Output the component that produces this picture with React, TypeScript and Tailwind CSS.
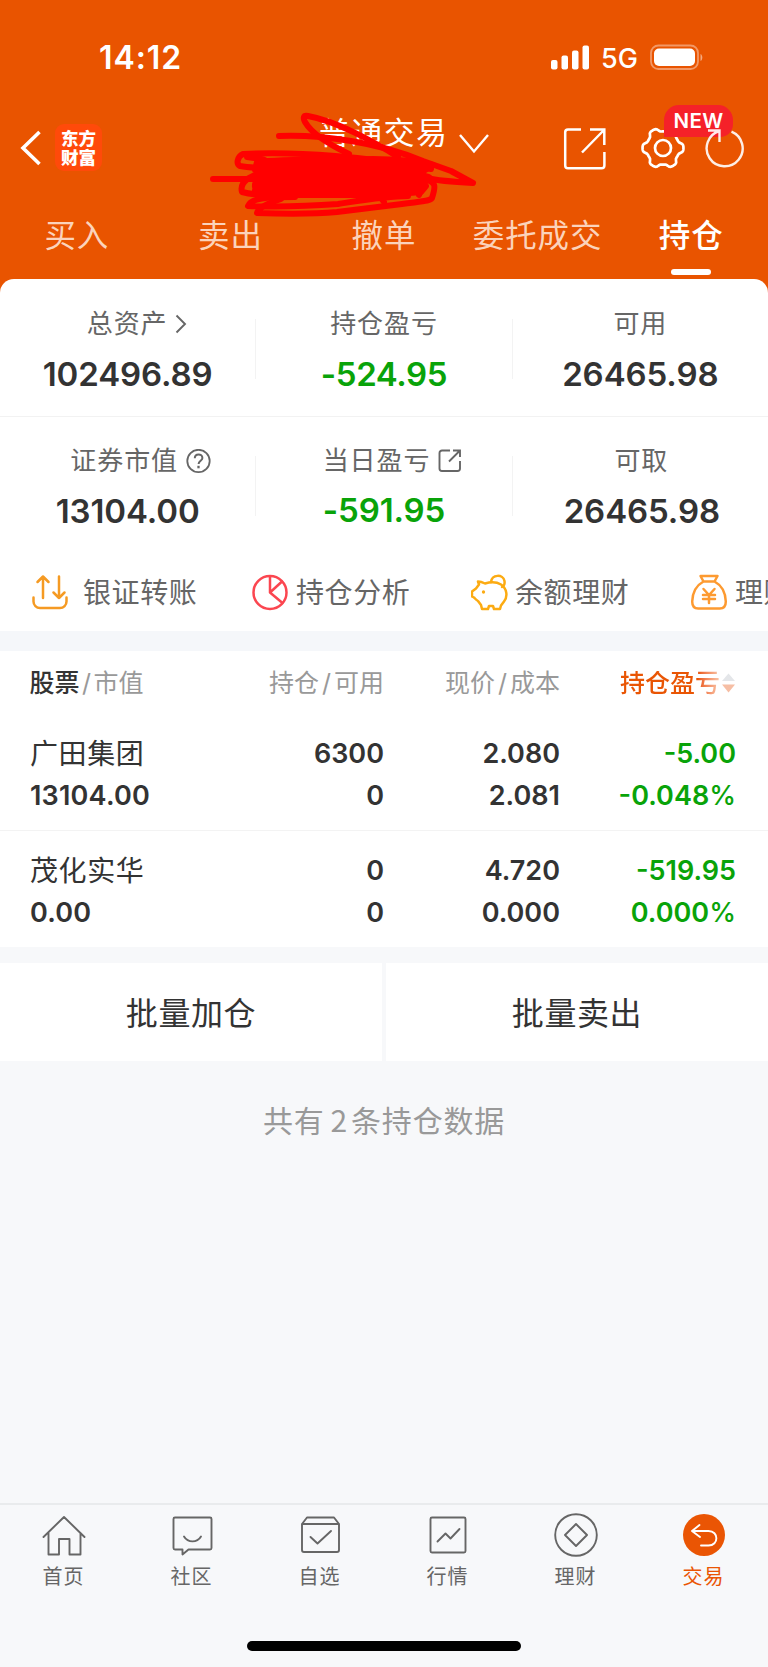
import React from "react";

const tabs = ["买入", "卖出", "撤单", "委托成交", "持仓"];

const holdings = [
  {
    name: "广田集团",
    value: "13104.00",
    amount: "6300",
    available: "0",
    price: "2.080",
    cost: "2.081",
    profit: "-5.00",
    percent: "-0.048",
  },
  {
    name: "茂化实华",
    value: "0.00",
    amount: "0",
    available: "0",
    price: "4.720",
    cost: "0.000",
    profit: "-519.95",
    percent: "0.000",
  },
];

// six rounded teeth around a circle
const gearPath = (() => {
  const points: string[] = [];
  for (let deg = 0; deg < 360; deg += 4) {
    const a = (deg * Math.PI) / 180;
    const r = 18.5 + 2 * Math.tanh(2.2 * Math.cos(6 * a));
    points.push(
      `${(22 + r * Math.cos(a)).toFixed(2)} ${(22 + r * Math.sin(a)).toFixed(2)}`
    );
  }
  return `M${points.join("L")}Z`;
})();

const StatusBar = () => (
  <div className="flex h-[100px] items-center pt-[15px] pl-[99px] pr-[64px] text-white">
    <span className="text-[32px] leading-none font-semibold tracking-[0.9px]">14:12</span>
    <svg className="ml-auto" width="39" height="26" viewBox="0 0 39 26" fill="currentColor">
      <rect x="0" y="15" width="6.5" height="9.5" rx="2" />
      <rect x="10.5" y="10.5" width="6.5" height="14" rx="2" />
      <rect x="21" y="5.5" width="6.5" height="19" rx="2" />
      <rect x="31.5" y="0.5" width="6.5" height="24" rx="2" />
    </svg>
    <span className="ml-[11px] w-[38px] pt-[1px] text-[27px] leading-none font-medium">5G</span>
    <svg className="ml-[11px]" width="54" height="27" viewBox="0 0 54 27">
      <rect x="1" y="1.5" width="47" height="23.5" rx="7.5" fill="none" stroke="#fff" strokeOpacity="0.4" strokeWidth="1.8" />
      <rect x="4" y="4.5" width="41" height="17.5" rx="5" fill="#fff" />
      <path d="M50.5 10v7c2.4-1 2.4-6 0-7z" fill="#fff" fillOpacity="0.5" />
    </svg>
  </div>
);

const Scribble = () => (
  <svg
    className="absolute left-[205px] top-[105px] pointer-events-none"
    width="280"
    height="120"
    viewBox="0 0 280 120"
    fill="none"
    stroke="#ff0000"
    strokeWidth="6"
    strokeLinecap="round"
    strokeLinejoin="round"
  >
    <path d="M74 31c26-1 48 1 72 5 25 4 50 11 72 20l28 10 22 12c-18-1-34-2-46-5" />
    <path d="M193 52C168 36 131 16 103 11c-5-1-5 2-3 6 7 12 23 22 44 32" />
    <path d="M226 64C170 52 90 46 38 49c-6 3-7 10-3 12 22 4 60 3 96 4" />
    <path d="M8 74h92M60 66c-14 5-26 10-23 21 14 4 45 4 65 1M50 82c-1-8 6-10 22-16" />
    <path d="M90 92c-29 0-44 1-47 9 27 1 63 0 90-2 26-4 49-8 70-8" />
    <path d="M76 94c-15 5-23 9-24 14 30 1 58 1 80-1l65-8c22-3 28-3 30-6 4-12 4-16-7-19" />
    <path d="M172 88l7 9M42 52c17 2 22 3 18 6M218 78l-4 12" />
    <path
      fill="#ff0000"
      d="M52 57c22-3 82-2 116-3 20 0 43 2 60 6l-14 9 10 3-6 4 3 5-5 6-34 3-60 0H94l-44-5 44-2-44-3 10-8 38 1-20-4-28-4z"
    />
  </svg>
);

const Header = () => (
  <div className="relative flex h-[98px] text-white">
    <svg className="ml-[20px] mt-[30px]" width="22" height="36" viewBox="0 0 22 36" fill="none" stroke="#fff" strokeWidth="3.6">
      <path d="M19.5 2L3 18l16.5 16" />
    </svg>
    <div className="ml-[13px] mt-[24px] flex h-[47px] w-[47px] flex-col items-center justify-center rounded-[9px] bg-[#ff4a0a] text-[17.5px] leading-[19px] font-black">
      <span>东方</span>
      <span>财富</span>
    </div>
    <div className="ml-[217px] mt-[17px] h-[31px] w-[129px] text-[31px] leading-[31px] tracking-[1.3px] whitespace-nowrap">普通交易</div>
    <svg className="ml-[10px] mt-[33px]" width="32" height="22" viewBox="0 0 32 22" fill="none" stroke="#fff" strokeWidth="2.4">
      <path d="M2 2l14 16.5L30 2" />
    </svg>
    <svg className="ml-[73px] mt-[27px]" width="44" height="44" viewBox="0 0 44 44" fill="none" stroke="#fff" strokeWidth="2.5">
      <path d="M18 2.5H5a2.8 2.8 0 0 0-2.8 2.8v33.2a2.8 2.8 0 0 0 2.8 2.8h33.6a2.8 2.8 0 0 0 2.8-2.8V25M27 2.5h14.3V18M40.5 3.5L19 25.5" />
    </svg>
    <svg className="ml-[34px] mt-[26px]" width="44" height="44" viewBox="0 0 44 44" fill="none" stroke="#fff" strokeWidth="2.7" strokeLinejoin="round">
      <path d={gearPath} />
      <circle cx="22" cy="22" r="8" />
    </svg>
    <div className="absolute left-[664px] top-[5px] flex h-[32px] w-[69px] items-center justify-center rounded-t-[15px] rounded-br-[13px] bg-[#f52129] text-[20.5px] leading-none font-semibold tracking-[0.4px]">
      NEW
    </div>
    <svg className="relative ml-[19px] mt-[28px]" width="40" height="41" viewBox="0 0 40 41" fill="none" stroke="#fff" strokeOpacity="0.9" strokeWidth="2.4">
      <path d="M27.5 3.6A18 18 0 1 1 15.5 3M4 2.5h11.5V14" />
    </svg>
  </div>
);

const Stat = ({ label, value, green, icon, labelClass = "", valueClass = "" }: any) => (
  <div className="flex flex-1 flex-col items-center">
    <div className={`flex h-[26px] items-center text-[26px] leading-[26px] tracking-[0.9px] text-[#666] ${labelClass}`}>
      {label}
      {icon}
    </div>
    <div
      className={`mt-[20px] h-[34px] text-[33px] leading-[34px] font-semibold tracking-[-0.1px] ${
        green ? "text-[#09a309]" : "text-[#333]"
      } ${valueClass}`}
    >
      {value}
    </div>
  </div>
);

const Line = () => <div className="mt-[8px] h-[60px] w-px bg-[#f3f3f3]" />;

const Summary = () => (
  <div className="rounded-t-[14px] bg-white">
    <div className="flex h-[138px] border-b border-[#f2f2f2] pt-[32px]">
      <Stat
        label="总资产"
        value="102496.89"
        labelClass="pl-[20px]"
        icon={
          <svg className="ml-[7px]" width="14" height="20" viewBox="0 0 14 20" fill="none" stroke="#666" strokeWidth="1.9">
            <path d="M1.5 1.5l8.5 8.5-8.5 8.5" />
          </svg>
        }
      />
      <Line />
      <Stat label="持仓盈亏" value="-524.95" green valueClass="tracking-[-0.4px]" />
      <Line />
      <Stat label="可用" value="26465.98" />
    </div>
    <div className="flex h-[136px] pt-[31px]">
      <Stat
        label="证券市值"
        value="13104.00"
        labelClass="pl-[26px]"
        icon={
          <svg className="ml-[8px]" width="25" height="25" viewBox="0 0 25 25" fill="none" stroke="#666" strokeWidth="1.8">
            <circle cx="12.5" cy="12" r="11.2" />
            <path d="M8.8 9.3c0-5.300 7.600-4.900 7.600-.4 0 2.600-3.800 3-3.800 6" strokeWidth="2" />
            <path d="M12.5 16.8v2.5" strokeWidth="2.3" />
          </svg>
        }
      />
      <Line />
      <Stat
        label="当日盈亏"
        value="-591.95"
        green
        labelClass="pl-[17px]"
        valueClass="-translate-y-px"
        icon={
          <svg className="ml-[8px]" width="24" height="24" viewBox="0 0 24 24" fill="none" stroke="#666" strokeWidth="1.9">
            <path d="M12 1.5H4a2.5 2.5 0 0 0-2.5 2.5v15.5A2.5 2.5 0 0 0 4 22h15.5a2.5 2.5 0 0 0 2.5-2.5V12M15 1.5h7V8M21.5 2L11 12.5" />
          </svg>
        }
      />
      <Line />
      <Stat label="可取" value="26465.98" labelClass="pl-[2px]" valueClass="pl-[3px]" />
    </div>
  </div>
);

const Action = ({ children, label, className = "" }: any) => (
  <div className={`flex shrink-0 items-center pt-[1px] text-[28px] leading-[28px] tracking-[0.6px] whitespace-nowrap text-[#666] ${className}`}>
    <svg width="38" height="38" viewBox="0 0 38 38" fill="none" strokeWidth="2.5" strokeLinecap="round" strokeLinejoin="round">
      {children}
    </svg>
    <span>{label}</span>
  </div>
);

const Actions = () => (
  <div className="flex h-[78px] overflow-hidden bg-white pl-[31px]">
    <Action label="银证转账" className="w-[220px] gap-[14px]">
      <g stroke="#f59a23">
        <path d="M2.500 23.500v4a6.500 6.500 0 0 0 6.500 6.500H29a6.500 6.500 0 0 0 6.500-6.500v-4" />
        <path d="M12 24V2.500M6.500 8L12 2.500 17.500 8M28 2.500V24M22.500 18.500L28 24l5.500-5.500" />
      </g>
    </Action>
    <Action label="持仓分析" className="w-[220px] gap-[7px]">
      <g stroke="#fb4650">
        <circle cx="19" cy="18.5" r="16.5" />
        <path d="M19 2.500v16l12.500 10.500M19 18.500L31 7.500" />
      </g>
    </Action>
    <Action label="余额理财" className="w-[219px] gap-[6px]">
      <g stroke="#fcab12">
        <path d="M7 7.500c3 0 5 1 7 2 5-1.500 11-2 16 1 6 4 7 12 3 17l-3 4-1 3.500h-6l-1-3h-4l-1 3h-6l-1-4-3-4c-2-1-3-2.500-4-3.500l-2-1v-5l4-3 3-4z" />
        <path d="M20 8c1-8 12-8 13.500-1 .5 3-.5 5-2.500 6" />
        <circle cx="12.5" cy="18" r="0.9" fill="#fcab12" strokeWidth="1.500" />
      </g>
    </Action>
    <Action label="理财" className="gap-[7px]">
      <g stroke="#fd9a30">
        <path d="M10.500 2h17l-3 5.500h-11zM13.500 7.500C6 11.500 2.500 19.500 2.200 27.500c0 5 2 7 6 7h21.600c4 0 6-2 6-7-.3-8-3.800-16-11.300-20" />
        <path d="M13.500 15l5.500 6 5.500-6M19 21v8M13 21h12M13 25h12" />
      </g>
    </Action>
  </div>
);

const Holdings = () => (
  <div className="h-[296px] bg-white">
    <div className="flex h-[63px] items-center pl-[29.5px] pr-[32px] text-[25px] leading-[25px] text-[#999] pt-[1px]">
      <div className="w-[173.5px]">
        <span className="font-medium text-[#333]">股票</span>
        <span className="mx-[2.5px]">/</span>市值
      </div>
      <div className="w-[181px] text-right">
        持仓<span className="mx-[3px]">/</span>可用
      </div>
      <div className="w-[176px] text-right">
        现价<span className="mx-[3px]">/</span>成本
      </div>
      <div className="ml-auto flex items-center">
        <span className="bg-linear-to-r from-[#e95504] from-78% to-[#f8c8ac] bg-clip-text font-medium text-transparent">
          持仓盈亏
        </span>
        <svg className="ml-[1px]" width="15" height="22" viewBox="0 0 15 22">
          <path d="M7.5 1.500L14 9H1z" fill="#e4e6e9" />
          <path d="M7.5 20.500L14 12.500H1z" fill="#f6bea4" />
        </svg>
      </div>
    </div>
    {holdings.map((item, i) => (
      <div
        key={item.name}
        className={`flex pt-[26px] pl-[30px] pr-[32px] text-[27px] leading-[28px] font-semibold text-[#333] ${
          i === 0 ? "h-[117px] border-b border-[#f3f3f3]" : "h-[116px]"
        }`}
      >
        <div className="flex w-[173px] flex-col gap-[14px]">
          <span className="text-[28px] font-normal tracking-[0.6px]">{item.name}</span>
          <span className="tracking-[0.2px]">{item.value}</span>
        </div>
        <div className="flex w-[181px] flex-col gap-[14px] text-right">
          <span>{item.amount}</span>
          <span>{item.available}</span>
        </div>
        <div className="flex w-[176px] flex-col gap-[14px] text-right">
          <span>{item.price}</span>
          <span>{item.cost}</span>
        </div>
        <div className="flex flex-1 flex-col gap-[14px] text-right text-[#09a309]">
          <span>{item.profit}</span>
          <span>
            {item.percent}
            <span className="font-medium">%</span>
          </span>
        </div>
      </div>
    ))}
  </div>
);

const NavItem = ({ label, active, children }: any) => (
  <div className={`flex flex-1 flex-col items-center ${active ? "text-[#ea5504]" : "text-[#666]"}`}>
    <svg width="46" height="46" viewBox="0 0 46 46" fill="none" stroke="currentColor" strokeWidth="1.9" strokeLinecap="round" strokeLinejoin="round">
      {children}
    </svg>
    <span className="mt-[9px] mr-[1px] text-[20px] leading-[20px] tracking-[0.9px]">{label}</span>
  </div>
);

const BottomNav = () => (
  <div className="mt-auto h-[164px] border-t-2 border-[#e9ebed]">
    <div className="flex pt-[7px]">
      <NavItem label="首页">
        <path d="M2.500 25L23 5l20.500 20M7.500 21v21.500H18V27h10.500v15.500h11V21" />
      </NavItem>
      <NavItem label="社区">
        <path d="M6 5.500h35a1.500 1.500 0 0 1 1.500 1.500v29a1.500 1.500 0 0 1-1.500 1.500H19.500l-6 5v-5H6A1.500 1.500 0 0 1 4.500 36V7A1.500 1.500 0 0 1 6 5.500z" />
        <path d="M15 24.500c4 6.500 13 6.500 17 0" />
      </NavItem>
      <NavItem label="自选">
        <path d="M5 12l5-6.500h27l5 6.500M5 12h37v26a2 2 0 0 1-2 2H7a2 2 0 0 1-2-2z" />
        <path d="M13.500 25l7 6.500L34 19" />
      </NavItem>
      <NavItem label="行情">
        <rect x="5.5" y="5.5" width="35" height="35" rx="1.5" />
        <path d="M12.500 29.500l8-8 5 5 9-9.500" />
      </NavItem>
      <NavItem label="理财">
        <circle cx="23" cy="23" r="20.8" />
        <path d="M23 12l11 11-11 11-11-11z" />
      </NavItem>
      <NavItem label="交易" active>
        <circle cx="23" cy="23" r="21" fill="#ea5504" stroke="none" />
        <path d="M18.500 13L11 19l8 6M11 19h16.500c10.500 0 10.500 14.500 0 14.500H20" stroke="#fff" />
      </NavItem>
    </div>
    <div className="mx-auto mt-[54px] h-[10px] w-[274px] rounded-full bg-black" />
  </div>
);

const App = () => {
  return (
    <div className="relative flex h-[1667px] w-[768px] flex-col overflow-hidden bg-[#f7f8fa] font-['Inter','Noto_Sans_CJK_SC',sans-serif]">
      <div className="bg-[#e95400]">
        <StatusBar />
        <Header />
        <div className="flex h-[81px] pt-[22px]">
          {tabs.map((tab) => {
            const active = tab === "持仓";
            return (
              <div
                key={tab}
                className={`flex flex-1 flex-col items-center text-[31.5px] leading-[32px] tracking-[0.9px] ${
                  active ? "font-medium text-white" : "text-[#fbd3bb]"
                }`}
              >
                {tab}
                {active && <div className="mt-[17px] h-[6px] w-[40px] rounded-full bg-white" />}
              </div>
            );
          })}
        </div>
        <Summary />
      </div>
      <Actions />
      <div className="h-[20px] bg-[#f5f7fa]" />
      <Holdings />
      <div className="mt-[16px] flex h-[98px] gap-[4px] text-[32px] leading-[32px] tracking-[0.6px] text-[#333]">
        <div className="flex flex-1 items-center justify-center bg-white pt-[4px]">批量加仓</div>
        <div className="flex flex-1 items-center justify-center bg-white pt-[4px]">批量卖出</div>
      </div>
      <div className="mt-[43px] text-center text-[30px] leading-[30px] tracking-[0.8px] text-[#999]">
        共有<span className="ml-[6px] mr-[3px] font-['Noto_Sans_CJK_SC']">2</span>条持仓数据
      </div>
      <BottomNav />
      <Scribble />
    </div>
  );
};

export default App;
